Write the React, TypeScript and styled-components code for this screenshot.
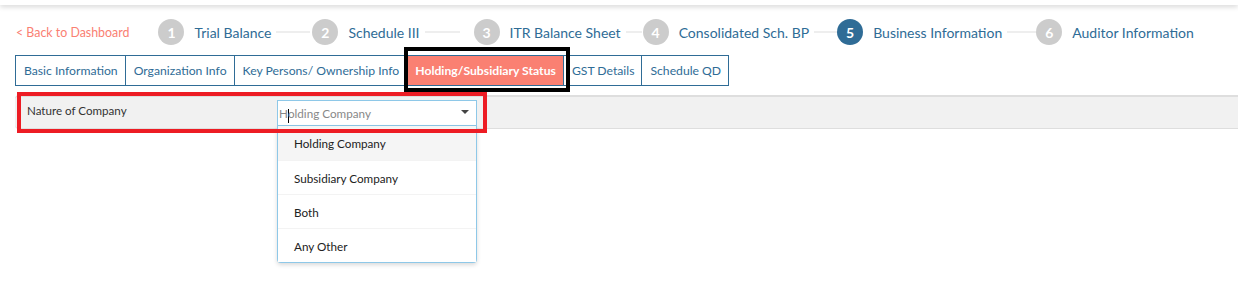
import React from "react";
import styled, { createGlobalStyle } from "styled-components";

const Global = createGlobalStyle`
  html, body { margin: 0; padding: 0; background: #fff; }
  body { font-family: Lato, "Noto Sans", sans-serif; }
  * { box-sizing: border-box; }
`;

const BLUE = "#2f6c96";
const SALMON = "#fa8072";

const Page = styled.div`
  position: relative;
  width: 1238px;
  height: 308px;
  overflow: hidden;
`;

const HeaderShadow = styled.div`
  height: 5px;
  background: #fff;
  box-shadow: 0 2px 5px rgba(0, 0, 0, 0.16);
`;

const StepperRow = styled.div`
  display: flex;
  align-items: center;
  height: 26px;
  margin-top: 14px;
  padding-left: 16px;
`;

const BackLink = styled.a`
  color: ${SALMON};
  font-size: 12.4px;
  text-decoration: none;
  margin-right: 29px;
  white-space: nowrap;
`;

const Circle = styled.span<{ $active?: boolean }>`
  width: 26px;
  height: 26px;
  border-radius: 50%;
  background: ${(p) => (p.$active ? BLUE : "#cccccc")};
  color: #fff;
  font-weight: 700;
  font-size: 14px;
  display: flex;
  align-items: center;
  justify-content: center;
  flex-shrink: 0;
`;

const StepLabel = styled.span`
  color: ${BLUE};
  font-size: 14px;
  margin-left: 10px;
  white-space: nowrap;
`;

const Connector = styled.span<{ $w: number; $after: number }>`
  width: ${(p) => p.$w}px;
  height: 2px;
  background: #eeeeee;
  margin-left: 5px;
  margin-right: ${(p) => p.$after}px;
  flex-shrink: 0;
`;

const Tabs = styled.div`
  display: flex;
  margin: 10px 0 0 15px;
  height: 31px;
`;

const Tab = styled.div<{ $active?: boolean }>`
  border: 1px solid ${BLUE};
  margin-left: -1px;
  padding: 0 7px 0 8px;
  display: flex;
  align-items: center;
  font-size: 12.2px;
  color: ${(p) => (p.$active ? "#fff" : BLUE)};
  background: ${(p) => (p.$active ? SALMON : "#fff")};
  font-weight: ${(p) => (p.$active ? 700 : 400)};
  white-space: nowrap;
  &:first-child { margin-left: 0; }
`;

const Panel = styled.div`
  position: relative;
  margin: 9px 0 0 15px;
  height: 34px;
  background: #f1f1f1;
  border-top: 2px solid #dedede;
  border-bottom: 1px solid #dedede;
  border-radius: 4px 0 0 4px;
  display: flex;
  align-items: flex-start;
  padding-left: 12px;
`;

const FieldLabel = styled.div`
  width: 250px;
  font-size: 11.6px;
  color: #333;
  padding-top: 7px;
`;

const SelectWrap = styled.div`
  position: relative;
  margin-top: 3px;
  width: 200px;
`;

const SelectBox = styled.div`
  height: 26px;
  border: 1px solid #8ec8e8;
  background: #fff;
  display: flex;
  align-items: center;
  padding: 3px 0 0 1px;
  font-size: 11.7px;
  color: #888;
  position: relative;
`;

const Caret = styled.span`
  display: inline-block;
  width: 1px;
  height: 14px;
  background: #000;
  vertical-align: middle;
  margin: 0 -1px 0 0;
`;

const Arrow = styled.span`
  position: absolute;
  right: 7px;
  top: 9px;
  width: 0;
  height: 0;
  border-left: 4px solid transparent;
  border-right: 4px solid transparent;
  border-top: 4px solid #444;
`;

const Menu = styled.ul`
  position: absolute;
  top: 26px;
  left: 0;
  width: 200px;
  margin: 0;
  padding: 0;
  list-style: none;
  background: #fff;
  border: 1px solid #8ec8e8;
  border-top: none;
  border-radius: 0 0 4px 4px;
  box-shadow: 0 2px 4px rgba(0, 0, 0, 0.15);
  z-index: 2;
`;

const MenuItem = styled.li<{ $hover?: boolean }>`
  height: 34px;
  display: flex;
  align-items: center;
  padding-left: 16px;
  font-size: 11.7px;
  color: #222;
  background: ${(p) => (p.$hover ? "#f5f5f5" : "#fff")};
  border-top: 1px solid #f3f3f3;
  &:first-child { border-top: none; }
`;

const Annotation = styled.div<{ $color: string; $x: number; $y: number; $w: number; $h: number }>`
  position: absolute;
  left: ${(p) => p.$x}px;
  top: ${(p) => p.$y}px;
  width: ${(p) => p.$w}px;
  height: ${(p) => p.$h}px;
  border: 4px solid ${(p) => p.$color};
  pointer-events: none;
  z-index: 3;
`;

const steps = [
  { n: 1, label: "Trial Balance", w: 34, after: 2 },
  { n: 2, label: "Schedule III", w: 35, after: 14 },
  { n: 3, label: "ITR Balance Sheet", w: 16, after: 1 },
  { n: 4, label: "Consolidated Sch. BP", w: 23, after: 0 },
  { n: 5, label: "Business Information", w: 29, after: 0, active: true },
  { n: 6, label: "Auditor Information" },
];

const tabs = [
  "Basic Information",
  "Organization Info",
  "Key Persons/ Ownership Info",
  "Holding/Subsidiary Status",
  "GST Details",
  "Schedule QD",
];

const options = ["Holding Company", "Subsidiary Company", "Both", "Any Other"];

export default function App() {
  return (
    <Page>
      <Global />
      <HeaderShadow />
      <StepperRow>
        <BackLink href="#">&lt; Back to Dashboard</BackLink>
        {steps.map((s) => (
          <React.Fragment key={s.n}>
            <Circle $active={s.active}>{s.n}</Circle>
            <StepLabel>{s.label}</StepLabel>
            {s.w !== undefined && <Connector $w={s.w} $after={s.after!} />}
          </React.Fragment>
        ))}
      </StepperRow>
      <Tabs>
        {tabs.map((t, i) => (
          <Tab key={t} $active={i === 3}>
            {t}
          </Tab>
        ))}
      </Tabs>
      <Panel>
        <FieldLabel>Nature of Company</FieldLabel>
        <SelectWrap>
          <SelectBox>
            <span>
              H<Caret />olding Company
            </span>
            <Arrow />
          </SelectBox>
          <Menu>
            {options.map((o, i) => (
              <MenuItem key={o} $hover={i === 0}>
                {o}
              </MenuItem>
            ))}
          </Menu>
        </SelectWrap>
      </Panel>
      <Annotation $color="#000" $x={404} $y={47} $w={166} $h={45} />
      <Annotation $color="#ed1c24" $x={17} $y={92} $w={470} $h={41} />
    </Page>
  );
}
